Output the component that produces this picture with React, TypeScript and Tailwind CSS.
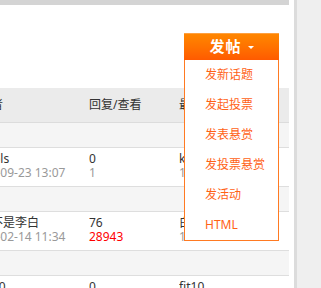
const menuItems = ["发新话题", "发起投票", "发表悬赏", "发投票悬赏", "发活动", "HTML"];

interface Thread {
  author: string;
  authorShift: string;
  date: string;
  replies: string;
  views: string;
  hot?: boolean;
  lastUser: string;
  lastDate: string;
}

const threads: Thread[] = [
  {
    author: "cools",
    authorShift: "-ml-[20px]",
    date: "2014-09-23 13:07",
    replies: "0",
    views: "1",
    lastUser: "kevin",
    lastDate: "14-09-23 13:07",
  },
  {
    author: "我不是李白",
    authorShift: "-ml-[21px]",
    date: "2014-02-14 11:34",
    replies: "76",
    views: "28943",
    hot: true,
    lastUser: "白云",
    lastDate: "14-02-15 09:32",
  },
  {
    author: "admin0",
    authorShift: "-ml-[37px]",
    date: "2013-11-02 10:20",
    replies: "0",
    views: "3",
    lastUser: "fit10",
    lastDate: "13-11-02 10:20",
  },
];

const PostButton: React.FC = () => {
  return (
    <div className="relative h-[27px] w-[95px]">
      <button className="flex h-[27px] w-full items-center justify-center gap-[6px] bg-linear-to-b from-[#ff8800] to-[#ff5a00] text-[15px] leading-none font-bold text-white shadow-[inset_0_1px_0_#ffa040]">
        <span className="tracking-[1px]">发帖</span>
        <span className="mt-[1px] h-0 w-0 border-x-[3px] border-t-[3px] border-x-transparent border-t-white" />
      </button>
      <ul className="absolute top-full left-0 z-10 w-full border border-t-0 border-[#ff7a22] bg-white">
        {menuItems.map((item) => (
          <li
            key={item}
            className="flex h-[30px] cursor-pointer items-center pl-[20px] text-[12px] text-[#ff6216]"
          >
            {item}
          </li>
        ))}
      </ul>
    </div>
  );
};

const SpacerRow: React.FC = () => (
  <div className="h-[25px] border-b border-[#dedede] bg-[#f5f5f5]" />
);

export default function App() {
  return (
    <div className="flex h-[288px] w-[321px] overflow-hidden bg-[#efefef] font-['Noto_Sans','Noto_Sans_CJK_SC',sans-serif]">
      <div className="w-[297px] shrink-0 border-r-[3px] border-[#dcdcdc] bg-white">
        <div className="w-[289px]">
          <div className="h-[5px] bg-[#d4d4d4]" />
          <div className="flex h-[83px] justify-end pt-[28px] pr-[10px]">
            <PostButton />
          </div>

          <div className="flex h-[35px] items-center border-b border-[#dcdcdc] bg-[#ebebeb] text-[12px] text-[#333]">
            <div className="w-[89px] overflow-hidden whitespace-nowrap">
              <span className="-ml-[21px] block">作者</span>
            </div>
            <div className="w-[90px]">回复/查看</div>
            <div className="flex-1 overflow-hidden whitespace-nowrap">最后发表</div>
          </div>

          {threads.map((t) => (
            <div key={t.author}>
              <SpacerRow />
              <div className="flex h-[39px] border-b border-[#dedede] pt-[4px] text-[12px] leading-[14px]">
                <div className="w-[89px] overflow-hidden whitespace-nowrap">
                  <div className={`${t.authorShift} text-[#333]`}>{t.author}</div>
                  <div className="-ml-[31px] text-[#999]">{t.date}</div>
                </div>
                <div className="w-[90px]">
                  <div className="text-[#333]">{t.replies}</div>
                  <div className={t.hot ? "text-[#ff0000]" : "text-[#999]"}>{t.views}</div>
                </div>
                <div className="flex-1 overflow-hidden whitespace-nowrap">
                  <div className="text-[#333]">{t.lastUser}</div>
                  <div className="text-[#999]">{t.lastDate}</div>
                </div>
              </div>
            </div>
          ))}
        </div>
      </div>
    </div>
  );
}
